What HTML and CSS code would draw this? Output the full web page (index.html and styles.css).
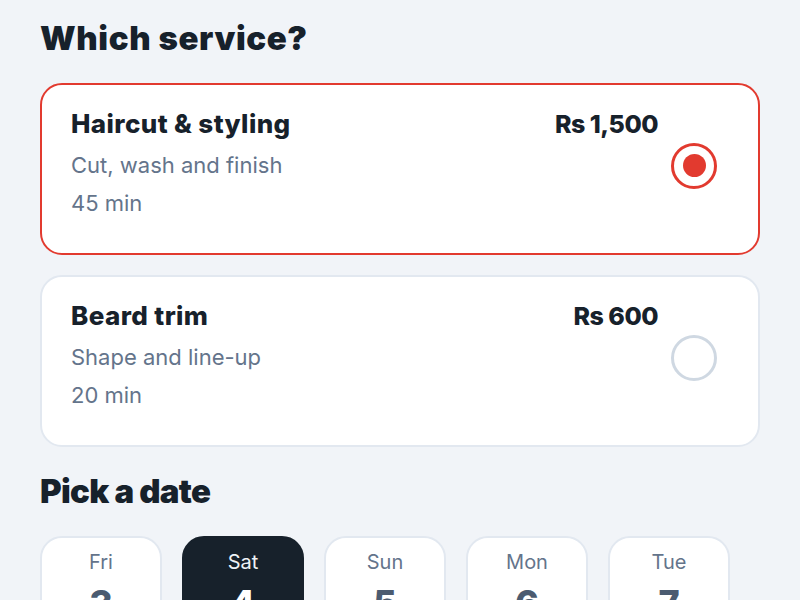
FILE: index.html
```html
<!DOCTYPE html>
<html lang="en">
<head>
<meta charset="utf-8">
<title>Book a service</title>
<link rel="stylesheet" href="styles.css">
</head>
<body>
<main class="page">
  <h1 class="heading">Which service?</h1>
  <div class="services">
    <label class="service is-selected">
      <div class="service-info">
        <div class="service-top">
          <span class="service-name">Haircut &amp; styling</span>
          <span class="service-price">Rs 1,500</span>
        </div>
        <div class="service-meta">Cut, wash and finish</div>
        <div class="service-meta">45 min</div>
      </div>
      <span class="radio"><span class="radio-dot"></span></span>
    </label>
    <label class="service">
      <div class="service-info">
        <div class="service-top">
          <span class="service-name">Beard trim</span>
          <span class="service-price">Rs 600</span>
        </div>
        <div class="service-meta">Shape and line-up</div>
        <div class="service-meta">20 min</div>
      </div>
      <span class="radio"></span>
    </label>
  </div>
  <h2 class="heading heading-date">Pick a date</h2>
  <div class="dates">
    <div class="date"><span class="date-day">Fri</span><span class="date-num">3</span></div>
    <div class="date is-selected"><span class="date-day">Sat</span><span class="date-num">4</span></div>
    <div class="date"><span class="date-day">Sun</span><span class="date-num">5</span></div>
    <div class="date"><span class="date-day">Mon</span><span class="date-num">6</span></div>
    <div class="date"><span class="date-day">Tue</span><span class="date-num">7</span></div>
  </div>
</main>
</body>
</html>
```

FILE: styles.css
```css
html, body {
  margin: 0;
  padding: 0;
  background: #f1f4f8;
}

body {
  font-family: Inter, "Noto Sans", sans-serif;
  color: #17212b;
  overflow: hidden;
}

.page {
  padding: 18px 40px 0;
}

.heading {
  margin: 0 0 25px;
  font-size: 33px;
  line-height: 40px;
  font-weight: 900;
  letter-spacing: 0.6px;
  color: #17212b;
}

.heading-date {
  margin-bottom: 25px;
  letter-spacing: -0.7px;
}

.services {
  display: flex;
  flex-direction: column;
  gap: 20px;
  margin-bottom: 24px;
}

.service {
  display: flex;
  align-items: center;
  gap: 13px;
  background: #ffffff;
  border: 2px solid #e2e8f0;
  border-radius: 22px;
  padding: 24px 41px 31px 29px;
}

.service.is-selected {
  border-color: #e23a2f;
}

.service-info {
  flex: 1;
}

.service-top {
  display: flex;
  justify-content: space-between;
  align-items: baseline;
  margin-bottom: 7px;
}

.service-name {
  font-size: 26px;
  line-height: 30px;
  font-weight: 800;
  letter-spacing: 0.4px;
  color: #17212b;
}

.service-price {
  font-size: 25px;
  line-height: 30px;
  font-weight: 800;
  letter-spacing: -0.5px;
  color: #17212b;
}

.service-meta {
  font-size: 22px;
  line-height: 38px;
  color: #64748b;
}

.radio {
  width: 46px;
  height: 46px;
  box-sizing: border-box;
  border: 3px solid #cfd8e2;
  border-radius: 50%;
  display: flex;
  align-items: center;
  justify-content: center;
  flex-shrink: 0;
}

.service.is-selected .radio {
  border-color: #e23a2f;
}

.radio-dot {
  width: 23px;
  height: 23px;
  border-radius: 50%;
  background: #e23a2f;
}

.dates {
  display: flex;
  gap: 20px;
}

.date {
  width: 122px;
  box-sizing: border-box;
  flex-shrink: 0;
  display: flex;
  flex-direction: column;
  align-items: center;
  background: #ffffff;
  border: 2px solid #e2e8f0;
  border-radius: 22px;
  padding: 10px 0 14px;
}

.date.is-selected {
  background: #17212b;
  border-color: #17212b;
}

.date-day {
  font-size: 20px;
  line-height: 28px;
  color: #64748b;
  margin-bottom: 5px;
}

.date-num {
  font-size: 36px;
  line-height: 44px;
  font-weight: 800;
  color: #4b5b70;
}

.date.is-selected .date-day {
  color: #eef2f6;
}

.date.is-selected .date-num {
  color: #ffffff;
}
```
